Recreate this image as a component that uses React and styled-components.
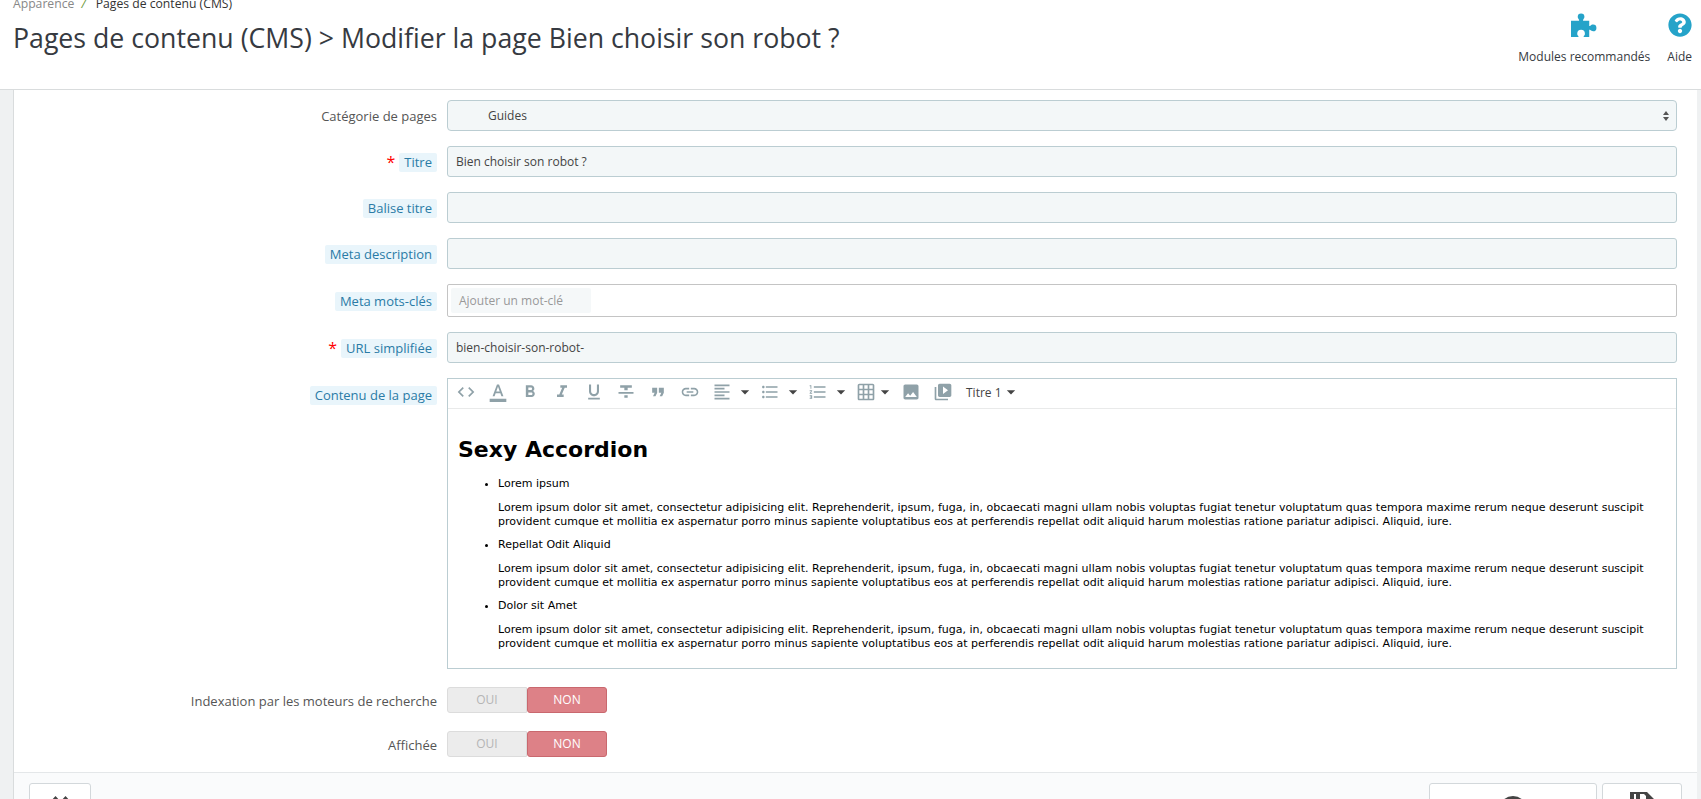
import React from "react";
import styled, { createGlobalStyle } from "styled-components";
import {
	MdCode,
	MdFormatColorText,
	MdFormatBold,
	MdFormatItalic,
	MdFormatUnderlined,
	MdFormatStrikethrough,
	MdFormatQuote,
	MdLink,
	MdFormatAlignLeft,
	MdFormatListBulleted,
	MdFormatListNumbered,
	MdGridOn,
	MdImage,
	MdVideoLibrary,
	MdArrowDropDown,
} from "react-icons/md";
import { FaQuestionCircle } from "react-icons/fa";

const GlobalStyle = createGlobalStyle`
	html, body {
		margin: 0;
		padding: 0;
		height: 100%;
		overflow: hidden;
		background: #eff1f2;
	}
	* {
		box-sizing: border-box;
	}
`;

const Page = styled.div`
	height: 799px;
	overflow: hidden;
	font-family: "Open Sans", sans-serif;
	font-size: 12px;
	color: #555;
`;

const Header = styled.header`
	height: 90px;
	background: #fff;
	border-bottom: 1px solid #d9dcdd;
	padding: 0 9px 0 13px;
	display: flex;
	justify-content: space-between;
	overflow: hidden;
`;

const HeaderLeft = styled.div`
	display: flex;
	flex-direction: column;
`;

const Breadcrumb = styled.div`
	margin-top: -5px;
	line-height: 18px;
	font-size: 12.2px;
	color: #333;
	a {
		color: #888;
	}
	i {
		color: #6c9a3b;
		margin: 0 10px 0 7px;
	}
`;

const Title = styled.h1`
	margin: 7px 0 0;
	font-size: 26.7px;
	line-height: 36px;
	font-weight: 400;
	color: #363a41;
`;

const HeaderActions = styled.div`
	display: flex;
	gap: 17px;
	padding-top: 13px;
`;

const HeaderAction = styled.div`
	display: flex;
	flex-direction: column;
	align-items: center;
	gap: 12px;
	color: #363a41;
	line-height: 16px;
	svg {
		height: 24px;
		width: auto;
		color: #25a3c9;
		fill: #25a3c9;
	}
`;

const Panel = styled.main`
	margin: 0 4px 0 13px;
	background: #fff;
	border-left: 1px solid #d9dcdd;
`;

const Form = styled.div`
	padding: 10px 20px 15px 0;
	display: flex;
	flex-direction: column;
	gap: 15px;
`;

const Row = styled.div`
	display: grid;
	grid-template-columns: 423px 1fr;
	column-gap: 10px;
	align-items: ${(props) => (props.$top ? "start" : "center")};
	${(props) => props.$toggle && "margin-top: 3px;"}
`;

const LabelCell = styled.div`
	display: flex;
	justify-content: flex-end;
	align-items: center;
	gap: 4px;
	font-size: 13px;
	padding-top: 1px;
	${(props) => props.$top && "margin-top: 7px;"}
`;

const Required = styled.span`
	color: #f00;
	font-size: 16px;
	line-height: 16px;
	height: 16px;
`;

const Hint = styled.span`
	background: #e9f5fb;
	color: #2a7ba6;
	border-radius: 2px;
	padding: 0 5px;
	line-height: 19px;
`;

const PlainLabel = styled.span`
	color: #555;
`;

const TextInput = styled.input`
	display: block;
	width: 100%;
	height: 31px;
	padding: 0 8px;
	background: #f3f7f8;
	border: 1px solid #bbcdd2;
	border-radius: 3px;
	font: inherit;
	color: #444;
	outline: none;
`;

const FakeSelect = styled.div`
	height: 31px;
	padding: 0 7px 0 40px;
	background: #f3f7f8;
	border: 1px solid #bbcdd2;
	border-radius: 4px;
	display: flex;
	align-items: center;
	justify-content: space-between;
	color: #444;
`;

const TagBox = styled.div`
	height: 33px;
	padding: 3px;
	background: #fff;
	border: 1px solid #c4c4c4;
	border-radius: 2px;
`;

const TagPlaceholder = styled.div`
	width: 140px;
	height: 25px;
	padding-left: 8px;
	background: #f5f8f9;
	border-radius: 2px;
	line-height: 25px;
	color: #999;
`;

const Editor = styled.div`
	height: 291px;
	border: 1px solid #bbcdd2;
	background: #fff;
`;

const Toolbar = styled.div`
	height: 30px;
	border-bottom: 1px solid #e9eaea;
	padding: 0 0 3px 2px;
	display: flex;
	align-items: center;
`;

const ToolIcon = styled.span`
	width: ${(props) => props.$w || 32}px;
	height: 24px;
	flex: none;
	display: flex;
	align-items: center;
	justify-content: center;
	color: #8fa1a8;
	font-size: 20px;
`;

const Caret = styled(MdArrowDropDown)`
	flex: none;
	margin-left: ${(props) => props.$ml}px;
	width: 20px;
	height: 20px;
	color: #444;
`;

const ToolText = styled.span`
	margin-left: 7px;
	color: #444;
`;

const Content = styled.div`
	padding: 28px 10px 0 10px;
	font-family: "DejaVu Sans", sans-serif;
	font-size: 11.03px;
	line-height: 14px;
	color: #000;
	h2 {
		margin: 0 0 14px;
		font-size: 22px;
		line-height: 26px;
		font-weight: 700;
	}
	ul {
		margin: 0;
		padding: 0 0 0 40px;
	}
	li p {
		margin: 0 0 10px;
	}
	li p + p {
		margin-bottom: 9px;
	}
`;

const Toggle = styled.div`
	display: flex;
	width: 160px;
	height: 26px;
`;

const ToggleOff = styled.span`
	width: 80px;
	background: #ececec;
	border: 1px solid #dcdcdc;
	border-radius: 3px 0 0 3px;
	color: #b5b5b5;
	text-align: center;
	line-height: 24px;
`;

const ToggleOn = styled.span`
	width: 80px;
	background: #dd8187;
	border: 1px solid #c9686e;
	border-radius: 3px;
	color: #fff;
	text-align: center;
	line-height: 24px;
`;

const Footer = styled.footer`
	border-top: 1px solid #e4e7e9;
	background: #fafbfc;
	height: 120px;
	padding: 10px 15px;
	display: flex;
	justify-content: space-between;
`;

const FooterGroup = styled.div`
	display: flex;
	gap: 5px;
`;

const FooterButton = styled.div`
	width: ${(props) => props.$w}px;
	height: 70px;
	background: #fff;
	border: 1px solid #d3d8db;
	border-radius: 3px;
	display: flex;
	justify-content: center;
	padding-top: ${(props) => props.$pad}px;
	color: #444;
	svg {
		width: 28px;
		height: 28px;
	}
`;

const tools = [
	MdCode,
	MdFormatColorText,
	MdFormatBold,
	MdFormatItalic,
	MdFormatUnderlined,
	MdFormatStrikethrough,
	MdFormatQuote,
	MdLink,
	MdFormatAlignLeft,
];

const lorem =
	"Lorem ipsum dolor sit amet, consectetur adipisicing elit. Reprehenderit, ipsum, fuga, in, obcaecati magni ullam nobis voluptas fugiat tenetur voluptatum quas tempora maxime rerum neque deserunt suscipit provident cumque et mollitia ex aspernatur porro minus sapiente voluptatibus eos at perferendis repellat odit aliquid harum molestias ratione pariatur adipisci. Aliquid, iure.";

const accordion = ["Lorem ipsum", "Repellat Odit Aliquid", "Dolor sit Amet"];

const PuzzleIcon = () => (
	<svg viewBox="0 0 27 25">
		<path d="M0 8h8.2c.4 0 .4-.6 0-1.2C7.6 6 7 5 7 4a3.5 3.5 0 0 1 7 0c0 1-.6 2-1.2 2.8-.4.6-.4 1.2 0 1.2H19v5.2c0 .5.6.5 1.2 0 .8-.6 1.6-1.2 2.8-1.2a3.5 3.5 0 0 1 0 7c-1.2 0-2-.6-2.8-1.2-.6-.5-1.2-.5-1.2 0V25h-5.5c-.5 0-.5-.6 0-1.2.6-.8 1-1.3 1-2.3a4 4 0 0 0-8 0c0 1 .4 1.5 1 2.3.5.6.5 1.2 0 1.2H0z" />
	</svg>
);

const SelectArrows = () => (
	<svg width="6" height="10" viewBox="0 0 6 10">
		<path d="M3 0l3 4H0zM3 10L0 6h6z" fill="#555" />
	</svg>
);

const BackIcon = () => (
	<svg viewBox="0 0 28 28">
		<path d="M9.5 0L15 6H4zM19.5 0L25 6H14z" fill="currentColor" />
	</svg>
);

const CircleIcon = () => (
	<svg viewBox="0 0 28 28">
		<circle cx="14" cy="14" r="14" fill="currentColor" />
	</svg>
);

const FloppyIcon = () => (
	<svg viewBox="0 0 24 28">
		<path
			fillRule="evenodd"
			d="M0 0h17l7 7v21H0zM4 2v9h2V2zM10 2v9h6V4l-2-2z"
			fill="currentColor"
		/>
	</svg>
);

function App() {
	return (
		<Page>
			<GlobalStyle />
			<Header>
				<HeaderLeft>
					<Breadcrumb>
						<a>Apparence</a>
						<i>/</i>
						Pages de contenu (CMS)
					</Breadcrumb>
					<Title>Pages de contenu (CMS) &gt; Modifier la page Bien choisir son robot ?</Title>
				</HeaderLeft>
				<HeaderActions>
					<HeaderAction>
						<PuzzleIcon />
						Modules recommandés
					</HeaderAction>
					<HeaderAction>
						<FaQuestionCircle />
						Aide
					</HeaderAction>
				</HeaderActions>
			</Header>
			<Panel>
				<Form>
					<Row>
						<LabelCell>
							<PlainLabel>Catégorie de pages</PlainLabel>
						</LabelCell>
						<FakeSelect>
							Guides
							<SelectArrows />
						</FakeSelect>
					</Row>
					<Row>
						<LabelCell>
							<Required>*</Required>
							<Hint>Titre</Hint>
						</LabelCell>
						<TextInput readOnly value="Bien choisir son robot ?" />
					</Row>
					<Row>
						<LabelCell>
							<Hint>Balise titre</Hint>
						</LabelCell>
						<TextInput readOnly value="" />
					</Row>
					<Row>
						<LabelCell>
							<Hint>Meta description</Hint>
						</LabelCell>
						<TextInput readOnly value="" />
					</Row>
					<Row>
						<LabelCell>
							<Hint>Meta mots-clés</Hint>
						</LabelCell>
						<TagBox>
							<TagPlaceholder>Ajouter un mot-clé</TagPlaceholder>
						</TagBox>
					</Row>
					<Row>
						<LabelCell>
							<Required>*</Required>
							<Hint>URL simplifiée</Hint>
						</LabelCell>
						<TextInput readOnly value="bien-choisir-son-robot-" />
					</Row>
					<Row $top>
						<LabelCell $top>
							<Hint>Contenu de la page</Hint>
						</LabelCell>
						<Editor>
							<Toolbar>
								{tools.map((Icon, i) => (
									<ToolIcon key={i}>
										<Icon />
									</ToolIcon>
								))}
								<Caret $ml={-3} />
								<ToolIcon $w={30}>
									<MdFormatListBulleted />
								</ToolIcon>
								<Caret $ml={-2} />
								<ToolIcon $w={30}>
									<MdFormatListNumbered />
								</ToolIcon>
								<Caret $ml={-2} />
								<ToolIcon $w={30}>
									<MdGridOn />
								</ToolIcon>
								<Caret $ml={-6} />
								<ToolIcon>
									<MdImage />
								</ToolIcon>
								<ToolIcon>
									<MdVideoLibrary />
								</ToolIcon>
								<ToolText>Titre 1</ToolText>
								<Caret $ml={-1} />
							</Toolbar>
							<Content>
								<h2>Sexy Accordion</h2>
								<ul>
									{accordion.map((item) => (
										<li key={item}>
											<p>{item}</p>
											<p>{lorem}</p>
										</li>
									))}
								</ul>
							</Content>
						</Editor>
					</Row>
					<Row $toggle>
						<LabelCell>
							<PlainLabel>Indexation par les moteurs de recherche</PlainLabel>
						</LabelCell>
						<Toggle>
							<ToggleOff>OUI</ToggleOff>
							<ToggleOn>NON</ToggleOn>
						</Toggle>
					</Row>
					<Row $toggle>
						<LabelCell>
							<PlainLabel>Affichée</PlainLabel>
						</LabelCell>
						<Toggle>
							<ToggleOff>OUI</ToggleOff>
							<ToggleOn>NON</ToggleOn>
						</Toggle>
					</Row>
				</Form>
				<Footer>
					<FooterButton $w={62} $pad={12}>
						<BackIcon />
					</FooterButton>
					<FooterGroup>
						<FooterButton $w={168} $pad={12}>
							<CircleIcon />
						</FooterButton>
						<FooterButton $w={80} $pad={8}>
							<FloppyIcon />
						</FooterButton>
					</FooterGroup>
				</Footer>
			</Panel>
		</Page>
	);
}

export default App;
